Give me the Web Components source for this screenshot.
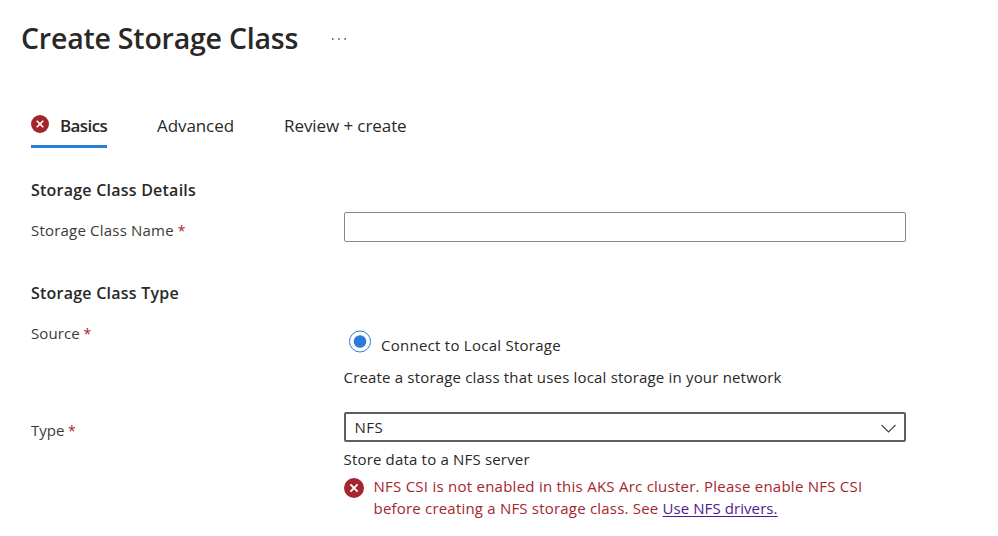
<!DOCTYPE html>
<html lang="en">
<head>
<meta charset="utf-8">
<title>Create Storage Class</title>
<style>
body { margin: 0; background: #fff; color: #292827; font: 15px/20px "Open Sans", "Noto Sans", sans-serif; }
</style>
</head>
<body>
<storage-page></storage-page>
<script>
const define = (name, html) => {
  const template = document.createElement('template');
  template.innerHTML = html;
  customElements.define(name, class extends HTMLElement {
    constructor() {
      super();
      this.attachShadow({ mode: 'open' }).append(template.content.cloneNode(true));
    }
  });
};

define('error-icon', `
<style>:host { display: block; flex: none; width: 20px; height: 20px; } svg { display: block; width: 100%; height: 100%; }</style>
<svg viewBox="0 0 20 20"><circle cx="10" cy="10" r="10" fill="#a4262c"/><path d="M6.4 6.4l7.2 7.2M13.6 6.4l-7.2 7.2" stroke="#fff" stroke-width="1.9"/></svg>`);

define('page-title', `
<style>
:host { display: flex; height: 39px; padding: 18px 0 0 21px; }
h1 { margin: 0; width: 310.5px; font-size: 28.5px; line-height: 40px; font-weight: 600; letter-spacing: -.22px; }
svg { display: block; margin-top: 19px; }
</style>
<h1><slot></slot></h1>
<svg width="16" height="4" fill="#444"><rect x="0" y="1.2" width="1.5" height="1.5"/><rect x="6.2" y="1.2" width="1.5" height="1.5"/><rect x="12.4" y="1.2" width="1.5" height="1.5"/></svg>`);

define('tab-item', `
<style>
:host { display: flex; box-sizing: border-box; height: 35px; font-size: 17px; line-height: 26px; white-space: nowrap; letter-spacing: -.08px; }
:host([selected]) { border-bottom: 3px solid #2b7bd9; font-weight: 600; letter-spacing: -.6px; }
::slotted(error-icon) { width: 18px; height: 18px; margin: 2px 11px 0 0; }
</style>
<slot name="icon"></slot><slot></slot>`);

define('tab-bar', `
<style>:host { display: grid; grid-template-columns: 76px 77px auto; column-gap: 50px; justify-content: start; padding: 56px 0 0 31px; }</style>
<slot></slot>`);

define('section-heading', `
<style>:host { display: block; } h2 { margin: 0; font-size: 16px; line-height: 22px; font-weight: 600; letter-spacing: .23px; }</style>
<h2><slot></slot></h2>`);

define('form-row', `
<style>
:host { display: grid; grid-template-columns: 313px 562px; align-items: start; }
.label { padding-top: var(--label-top, 8px); color: #3b3a39; letter-spacing: var(--label-spacing, 0); }
.label::after { content: " *"; color: #a4262c; font-size: 14px; }
</style>
<div class="label"><slot name="label"></slot></div><div><slot></slot></div>`);

define('text-input', `
<style>:host { display: block; } div { box-sizing: border-box; height: 30px; border: 1px solid #8a8886; border-radius: 2px; }</style>
<div role="textbox"></div>`);

define('radio-option', `
<style>
:host { display: flex; gap: 10px; padding-left: 5px; letter-spacing: .26px; }
svg { display: block; width: 22px; height: 23px; }
span { padding-top: 5px; }
</style>
<svg viewBox="0 0 22 23"><circle cx="11" cy="11.5" r="10.5" fill="none" stroke="#2b7bd9"/><circle cx="11" cy="11.5" r="6.3" fill="#2b7bd9"/></svg>
<span><slot></slot></span>`);

define('drop-down', `
<style>
:host { display: flex; justify-content: space-between; box-sizing: border-box; height: 30px; padding: 3px 7px 0 8.5px; border: 2px solid #605e5c; border-radius: 2px; letter-spacing: .5px; }
svg { display: block; margin-top: 6px; }
</style>
<span><slot></slot></span>
<svg width="17" height="12" viewBox="0 0 17 12"><path d="M1.5 2l7 7 7-7" fill="none" stroke="#444" stroke-width="1.1"/></svg>`);

define('error-message', `
<style>
:host { display: flex; gap: 10px; color: #a4262c; line-height: 22px; letter-spacing: .25px; white-space: nowrap; }
error-icon { margin-top: 3px; margin-left: -.5px; }
.second { letter-spacing: .2px; }
::slotted([slot=second]) { letter-spacing: .2px; }
::slotted(a) { color: #4f1a91; letter-spacing: .08px; text-decoration-thickness: 1px; text-underline-offset: 2px; }
</style>
<error-icon></error-icon>
<div><div><slot></slot></div><div class="second"><slot name="second"></slot><slot name="link"></slot></div></div>`);

define('storage-page', `
<style>
:host { display: block; width: 998px; height: 536px; overflow: hidden; }
main { display: grid; padding: 31px 0 0 31px; }
.type-heading { margin-top: 40px; }
.name { margin-top: 11px; --label-spacing: .2px; }
.source { margin-top: 19px; --label-top: 0; --label-spacing: .1px; }
.source radio-option { margin-top: 7px; }
.help { letter-spacing: .18px; margin-left: -.5px; }
.source .help { margin-top: 12px; }
.type { margin-top: 25px; }
.type .help { margin-top: 7px; }
error-message { margin-top: 6px; }
</style>
<page-title>Create Storage Class</page-title>
<tab-bar>
  <tab-item selected><error-icon slot="icon"></error-icon>Basics</tab-item>
  <tab-item>Advanced</tab-item>
  <tab-item>Review + create</tab-item>
</tab-bar>
<main>
  <section-heading>Storage Class Details</section-heading>
  <form-row class="name"><span slot="label">Storage Class Name</span><text-input></text-input></form-row>
  <section-heading class="type-heading">Storage Class Type</section-heading>
  <form-row class="source"><span slot="label">Source</span>
    <radio-option>Connect to Local Storage</radio-option>
    <div class="help">Create a storage class that uses local storage in your network</div>
  </form-row>
  <form-row class="type"><span slot="label">Type</span>
    <drop-down>NFS</drop-down>
    <div class="help">Store data to a NFS server</div>
    <error-message>NFS CSI is not enabled in this AKS Arc cluster. Please enable NFS CSI<span slot="second">before creating a NFS storage class. See&nbsp;</span><a slot="link" href="#">Use NFS drivers.</a></error-message>
  </form-row>
</main>`);
</script>
</body>
</html>
